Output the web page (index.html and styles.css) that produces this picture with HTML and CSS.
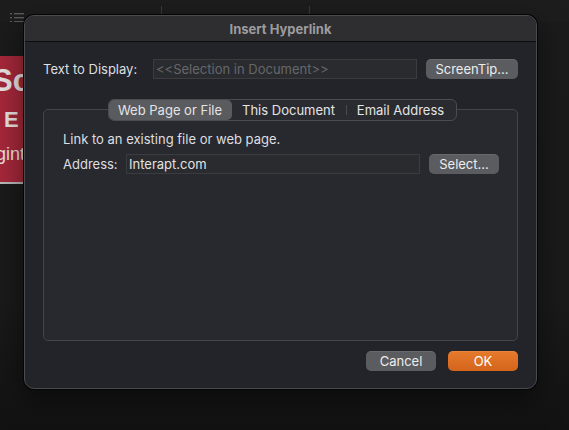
FILE: index.html
```html
<!DOCTYPE html>
<html lang="en">
<head>
  <meta charset="UTF-8">
  <title>Insert Hyperlink</title>
  <link rel="stylesheet" href="styles.css">
</head>
<body>

<!-- окно документа за диалогом -->
<div class="desktop">
  <div class="toolbar">
    <svg class="tb-icon" width="14" height="10" viewBox="0 0 14 10">
      <rect x="0" y="1" width="2" height="1.4" fill="#5c5c5c"/>
      <rect x="4" y="1" width="10" height="1.4" fill="#5c5c5c"/>
      <rect x="0" y="5" width="2" height="1.4" fill="#5c5c5c"/>
      <rect x="4" y="5" width="10" height="1.4" fill="#5c5c5c"/>
      <rect x="0" y="9" width="2" height="1" fill="#5c5c5c"/>
      <rect x="4" y="9" width="10" height="1" fill="#5c5c5c"/>
    </svg>
    <span class="tb-sep sep-1"></span>
    <span class="tb-sep sep-2"></span>
  </div>
  <div class="doc">
    <div class="banner">
      <span class="b-big">Sc</span>
      <span class="b-mid">E</span>
      <span class="b-small">gint</span>
    </div>
  </div>
</div>

<div class="dialog">
  <div class="titlebar">Insert Hyperlink</div>
  <div class="dialog-body">
    <div class="row">
      <label class="row-label" for="display">Text to Display:</label>
      <input type="text" id="display" class="field" placeholder="&lt;&lt;Selection in Document&gt;&gt;">
      <button class="btn btn-tip">ScreenTip...</button>
    </div>

    <div class="group">
      <div class="seg">
        <span class="seg-item active tab-web">Web Page or File</span>
        <span class="seg-item tab-doc">This Document</span>
        <span class="seg-item tab-mail">Email Address</span>
      </div>
      <div class="panel">
        <p class="hint">Link to an existing file or web page.</p>
        <div class="row addr-row">
          <label class="addr-label" for="address">Address:</label>
          <input type="text" id="address" class="field" value="Interapt.com">
          <button class="btn btn-select">Select...</button>
        </div>
      </div>
    </div>

    <div class="footer">
      <button class="btn btn-cancel">Cancel</button>
      <button class="btn btn-ok">OK</button>
    </div>
  </div>
</div>

</body>
</html>
```

FILE: styles.css
```css
html, body {
  margin: 0;
  padding: 0;
}

body {
  width: 569px;
  height: 430px;
  overflow: hidden;
  background: linear-gradient(#1b1b1b 0%, #1a1a1a 70%, #121212 100%);
  font-family: Inter, 'Noto Sans', sans-serif;
  font-size: 13px;
  position: relative;
}

.desktop {
  height: 100%;
}

.toolbar {
  height: 22px;
  background-color: #1d1d1d;
  position: relative;
}

.tb-icon {
  position: absolute;
  left: 10px;
  top: 12px;
}

.tb-sep {
  position: absolute;
  top: 6px;
  width: 1px;
  height: 10px;
  background-color: #3a3a3a;
}

.sep-1 {
  left: 161px;
}

.sep-2 {
  left: 309px;
}

.doc {
  padding-top: 34px;
}

.banner {
  width: 200px;
  height: 128px;
  background-color: #a5283a;
  border-bottom: 2px solid #b9b9b9;
  box-sizing: border-box;
  color: #e9e2e3;
  display: flex;
  flex-direction: column;
  margin-left: -5px;
  padding-top: 7px;
}

.b-big {
  font-family: 'Liberation Sans', sans-serif;
  font-weight: 700;
  font-size: 31px;
  line-height: 36px;
  margin-left: -3px;
}

.b-mid {
  font-family: 'Liberation Sans', sans-serif;
  font-weight: 700;
  font-size: 22px;
  line-height: 26px;
  margin-top: 8px;
  margin-left: 9px;
}

.b-small {
  font-family: 'Liberation Sans', sans-serif;
  font-size: 18px;
  line-height: 22px;
  margin-top: 10px;
  margin-left: 1px;
}

/* диалог */
.dialog {
  position: absolute;
  left: 24px;
  top: 15px;
  width: 513px;
  height: 374px;
  box-sizing: border-box;
  border: 1px solid #4a4b4e;
  border-radius: 10px;
  background-color: #232429;
  box-shadow: 0 0 0 1px #050505, 0 10px 30px rgba(0, 0, 0, 0.5);
  overflow: hidden;
  color: #dedfe0;
  display: flex;
  flex-direction: column;
}

.titlebar {
  height: 25px;
  background-color: #2e2e31;
  border-bottom: 1px solid #0d0d0e;
  display: flex;
  align-items: center;
  justify-content: center;
  font-weight: 700;
  color: #9c9c9e;
  padding-top: 1px;
}

.dialog-body {
  padding: 17px 18px 17px 18px;
}

.row {
  display: flex;
  align-items: center;
  height: 20px;
}

.row-label {
  width: 110px;
  flex-shrink: 0;
}

.field {
  flex: 1;
  min-width: 0;
  height: 20px;
  box-sizing: border-box;
  border: 1px solid #3b3c40;
  background-color: #2a2b2f;
  color: #e2e2e2;
  font-family: Inter, 'Noto Sans', sans-serif;
  font-size: 13px;
  padding: 0 2px;
  margin: 0 9px 0 0;
  outline: none;
}

.field::placeholder {
  color: #66676b;
}

.btn {
  height: 20px;
  border: none;
  border-radius: 5px;
  background-color: #5b5c60;
  color: #ececec;
  font-family: Inter, 'Noto Sans', sans-serif;
  font-size: 13px;
  padding: 0;
  box-shadow: inset 0 1px 0 rgba(255, 255, 255, 0.08);
  cursor: pointer;
}

.btn-tip {
  width: 92px;
}

/* вкладки и панель */
.group {
  margin-top: 20px;
  display: flex;
  flex-direction: column;
  align-items: center;
}

.seg {
  display: flex;
  height: 22px;
  box-sizing: border-box;
  border: 1px solid #4b4c50;
  border-radius: 6px;
  background-color: #2a2b30;
  position: relative;
  z-index: 1;
  margin-left: 3px;
}

.seg-item {
  display: flex;
  align-items: center;
  justify-content: center;
  height: 20px;
  color: #e4e4e5;
  position: relative;
}

.seg-item.active {
  background-color: #5a5b5f;
  border-radius: 5px;
}

.tab-web {
  width: 123px;
}

.tab-doc {
  width: 114px;
}

.tab-mail {
  width: 110px;
}

.tab-mail::before {
  content: '';
  position: absolute;
  left: 0;
  top: 5px;
  width: 1px;
  height: 10px;
  background-color: #4a4b4f;
}

.panel {
  align-self: stretch;
  margin-top: -12px;
  height: 232px;
  box-sizing: border-box;
  border: 1px solid #444549;
  border-radius: 5px;
  background-color: #28292e;
  padding: 21px 18px 0 19px;
}

.hint {
  margin: 0;
  line-height: 16px;
}

.addr-row {
  margin-top: 7px;
}

.addr-label {
  width: 63px;
  flex-shrink: 0;
}

.btn-select {
  width: 70px;
}

.footer {
  display: flex;
  justify-content: flex-end;
  gap: 12px;
  margin-top: 10px;
}

.btn-cancel {
  width: 70px;
}

.btn-ok {
  width: 70px;
  background: linear-gradient(#e67a2c, #d2651b);
  color: #fff;
}
```
